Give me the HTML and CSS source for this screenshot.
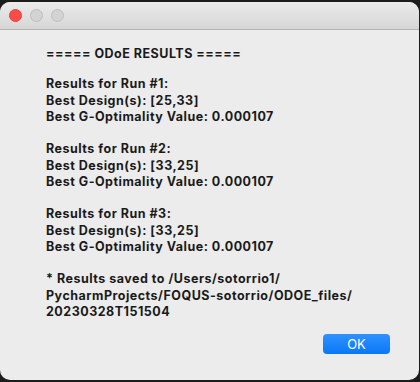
FILE: index.html
```html
<!DOCTYPE html>
<html lang="en">
<head>
    <meta charset="UTF-8">
    <meta name="viewport" content="width=device-width, initial-scale=1.0">
    <title>ODoE Results</title>
    <link rel="stylesheet" href="styles.css">
</head>
<body>
    <div class="window">
        <div class="titlebar">
            <span class="light red"></span>
            <span class="light"></span>
            <span class="light"></span>
        </div>
        <div class="content">
            <div class="heading">===== ODoE RESULTS =====</div>

            <div class="block">
                <div>Results for Run #1:</div>
                <div>Best Design(s): [25,33]</div>
                <div>Best G-Optimality Value: 0.000107</div>
            </div>

            <div class="block">
                <div>Results for Run #2:</div>
                <div>Best Design(s): [33,25]</div>
                <div>Best G-Optimality Value: 0.000107</div>
            </div>

            <div class="block">
                <div>Results for Run #3:</div>
                <div>Best Design(s): [33,25]</div>
                <div>Best G-Optimality Value: 0.000107</div>
            </div>

            <div class="block">
                <div>* Results saved to /Users/sotorrio1/</div>
                <div>PycharmProjects/FOQUS-sotorrio/ODOE_files/</div>
                <div>20230328T151504</div>
            </div>
        </div>
        <div class="footer">
            <button type="button" class="ok">OK</button>
        </div>
    </div>
</body>
</html>
```

FILE: styles.css
```css
body {
    margin: 0;
    padding: 2px 1px 2px 0;
    background-color: #1c1c1c;
    font-family: Inter, "Liberation Sans", sans-serif;
}
.window {
    height: 378px;
    background: #ececec;
    border-radius: 10px;
    overflow: hidden;
    display: flex;
    flex-direction: column;
}
.titlebar {
    height: 27px;
    border-bottom: 1px solid #b4b4b4;
    background: linear-gradient(#ebebeb, #d6d6d6);
    display: flex;
    align-items: center;
    gap: 8px;
    padding-left: 9px;
}
.light {
    width: 11px;
    height: 11px;
    border-radius: 50%;
    background: #d3d3d3;
    border: 1px solid #bdbdbd;
}
.light.red {
    background: #fb4c47;
    border-color: #e0443e;
}
.content {
    flex: 1;
    padding: 16px 0 0 46px;
    font-size: 12.5px;
    font-weight: bold;
    letter-spacing: 0.5px;
    line-height: 16.25px;
    color: #1a1a1a;
}
.block {
    margin-top: 16.25px;
}
.heading + .block {
    margin-top: 14px;
}
.footer {
    display: flex;
    justify-content: flex-end;
    padding: 0 29px 26px 0;
}
.ok {
    width: 67px;
    height: 20px;
    border: none;
    border-radius: 4px;
    background: linear-gradient(#2f91ff, #0a78f6);
    color: #fff;
    font-family: Inter, "Liberation Sans", sans-serif;
    font-size: 13px;
    padding: 0;
}
```
